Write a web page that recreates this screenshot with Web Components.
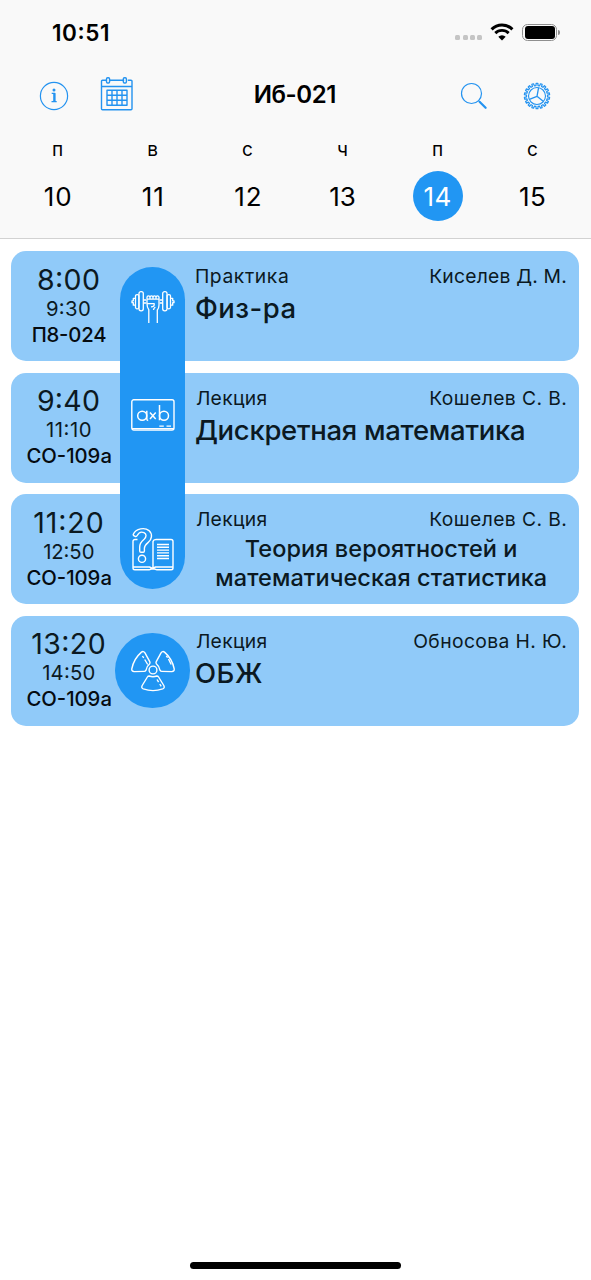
<!DOCTYPE html>
<html lang="ru">
<head>
<meta charset="utf-8">
<title>Иб-021</title>
<style>
html,body{margin:0;height:100%;background:#fff;overflow:hidden}
body{font-family:Inter,"Liberation Sans",sans-serif;color:#000}
</style>
</head>
<body>
<schedule-app></schedule-app>
<script>
const ctx = document.createElement('canvas').getContext('2d');
function define(name, html, after) {
  customElements.define(name, class extends HTMLElement {
    connectedCallback() {
      if (this.shadowRoot) return;
      const t = document.createElement('template');
      t.innerHTML = typeof html === 'function' ? html(this) : html;
      this.attachShadow({mode: 'open'}).append(t.content.cloneNode(true));
      if (after) after(this);
    }
  });
}

/* A single line of text tracked so that its ink is exactly [w] pixels wide. */
define('fit-text', '<style>:host{display:block;white-space:nowrap;width:max-content}span{display:block;font-feature-settings:"calt" 1}</style><span><slot></slot></span>', el => {
  const cs = getComputedStyle(el), s = el.textContent;
  ctx.font = `${cs.fontWeight} ${cs.fontSize} ${cs.fontFamily}`;
  const m = ctx.measureText(s);
  const left = -m.actualBoundingBoxLeft, right = m.actualBoundingBoxRight;
  const ls = (+el.getAttribute('w') - (right - left)) / (s.length - 1);
  const span = el.shadowRoot.querySelector('span');
  span.style.letterSpacing = ls + 'px';
  span.style.marginLeft = -left + 'px';
  span.style.marginRight = -(m.width - right + ls) + 'px';
});

const gear = () => {
  let d = '', n = 18;
  for (let i = 0; i < n; i++) {
    const p = (r, f) => { const a = (i + f) * 2 * Math.PI / n - Math.PI / 2; return (14 + r * Math.cos(a)).toFixed(2) + ' ' + (14 + r * Math.sin(a)).toFixed(2); };
    d += (i ? 'L' : 'M') + p(10.5, -.28) + 'L' + p(12.7, -.2) + 'L' + p(12.7, .2) + 'L' + p(10.5, .28);
  }
  return d + 'Z';
};
const blade = '<path d="M-3.800 6Q0 7.400 3.800 6Q5 6 5.600 7L10.800 15.500Q12 18 9.700 18.900Q0 22.300 -9.700 18.900Q-12 18 -10.800 15.500L-5.600 7Q-5 6 -3.800 6Z"/>';
const icons = {
  info: [30, 30, '<circle cx="15" cy="15" r="13.6" stroke-width="1.2"/><path d="M12.7 12.3h3.2v8.2M12.5 20.7h5.2" stroke-width="1.2"/><path d="M15.2 12.3v8.2" stroke-width="2"/><circle cx="15" cy="9.1" r="1.5" fill="currentColor" stroke="none"/>'],
  calendar: [34, 36, '<g stroke-width="1.4"><path d="M6.2 4.3H2.5a1 1 0 0 0-1 1V32.700a1 1 0 0 0 1 1H31a1 1 0 0 0 1-1V5.300a1 1 0 0 0-1-1h-3.200M9.700 4.300h14.500M1.500 10.500H32"/><rect x="6.500" y="1.700" width="3.100" height="5.300" rx="1.200"/><rect x="23.300" y="1.700" width="3.100" height="5.300" rx="1.200"/><path d="M7 14.300h20v15H7zM12 14.300v15M17 14.300v15M22 14.300v15M7 19.300h20M7 24.300h20"/></g>'],
  search: [28, 28, '<circle cx="12.500" cy="11.500" r="10" stroke-width="1.200"/><path d="M19.700 18.900l1.600 1.600" stroke-width="1.200"/><path d="M20.800 20l5.800 5.800" stroke-width="2.200" stroke-linecap="round"/>'],
  gear: [28, 28, `<path d="${gear()}" stroke-width="1.200"/><circle cx="14" cy="14" r="8.500" stroke-width="1.100"/><path d="M14 14.300L15.600 5.600M14 14.300L6.400 17.400M14 14.300l6.200 5" stroke-width="1.300"/>`],
  wifi: [24, 18, '<path d="M1.600 6.300A14.800 14.800 0 0 1 22.400 6.300" stroke-width="3.100"/><path d="M5.300 10.100A9.500 9.500 0 0 1 18.700 10.100" stroke-width="2.900"/><path d="M12 17.400L8.300 13.700A5.300 5.300 0 0 1 15.700 13.700Z" fill="currentColor" stroke="none"/>'],
  dumbbell: [44, 34, '<g stroke-width="1.300"><path d="M4.500 8.300H2.300v2.500H1v1.900h1.300v2.500h2.200M39.500 8.300h2.200v2.500H43v1.900h-1.300v2.500h-2.200"/><rect x="4.500" y="4.600" width="3.400" height="14.200" rx="1.500"/><rect x="8" y="1.600" width="4.300" height="19.200" rx="2"/><rect x="31.700" y="1.600" width="4.300" height="19.200" rx="2"/><rect x="36.100" y="4.600" width="3.400" height="14.200" rx="1.500"/><path d="M12.300 10h3M12.300 13h3M28.700 10h3M28.700 13h3"/><path d="M16 9V7.400a1.500 1.500 0 0 1 3 0V9m0-1.600a1.500 1.500 0 0 1 3 0V9m0-1.600a1.500 1.500 0 0 1 3 0V9m0-1.600a1.500 1.500 0 0 1 3 0V15q0 3-1.700 5V33M16 9.200h12M16 9.200v4.500h7.200q.6 3-3.200 3.100M16 13.700q0 4 1.800 6V33M22.500 20q0-1.600 1.800-3"/></g>'],
  board: [44, 32, '<rect x=".800" y=".800" width="42.200" height="30.200" rx="2" stroke-width="1.400"/><path d="M1 29.500H43M28.300 27.100h4.500M35.500 27.100h4.500" stroke-width="1.200"/><g stroke-width="1.500"><circle cx="11.200" cy="16.700" r="4.500"/><path d="M15.800 11.800V20q0 1.400 1.400 1.400M19 13.500l5.700 6.400M24.700 13.500L19 19.900M28.500 6V21.300"/><circle cx="33" cy="16.700" r="4.500"/></g>'],
  book: [42, 44, '<g stroke-width="1.400"><path d="M5.500 12.500H3a2 2 0 0 0-2 2V41q0 1.800 1.800 1.800H17l2.500-.8h3l2.500.8h14.200Q41 42.800 41 41V14.500a2 2 0 0 0-2-2H24q-2.500 0-3 2V41M1.500 40h16l3 1.500 3-1.500h17M25 17.500h12M25 20.300h12M25 23.100h12M25 25.900h12M25 28.700h12M25 31.500h12"/><path d="M1.200 7.500C4 1 13 .2 17 3.600 21 7.200 19.800 12.600 16 15.600c-2.800 2.300-3.600 3.300-3.600 5.600v2.800q0 1.300-1.300 1.300H9q-1.300 0-1.300-1.300V20c0-4 1.500-5.500 4.400-7.800C14.700 10 14.700 7 12 5.700 9 4.300 6.500 6 5.200 8.500q-.7 1.400-2.200.8-2-.6-1.800-1.800Z"/><circle cx="10" cy="31.800" r="3.600"/></g>'],
  radiation: [46, 44, `<g transform="translate(23 21)" stroke-width="1.400"><circle r="3.900"/>${[0, 120, 240].map(a => `<g transform="rotate(${a})">${blade}</g>`).join('')}<path d="M4 9.500l1.600 2.600M6.800 14l1.400 2.300M-10.500-14l1.200 2M-8.300-10.500l3 5M13.300-14.200l1.300 1.800M15.500-11l2.700 5.500"/></g>`]
};
define('line-icon', el => {
  const [w, h, body] = icons[el.getAttribute('name')];
  return `<style>:host{display:block;width:${w}px;height:${h}px;flex:none}svg{display:block}</style><svg width="${w}" height="${h}" viewBox="0 0 ${w} ${h}" fill="none" stroke="currentColor" stroke-linejoin="round">${body}</svg>`;
});

define('status-bar', `<style>
:host{display:flex;height:65px;box-sizing:border-box;padding:0 31px 0 53px;align-items:center;justify-content:space-between}
.time{font-size:22.500px;font-weight:600}
.right{display:flex;align-items:center}
.dots{display:flex;gap:2.200px;margin:9px 8px 0 0}.dots i{width:5px;height:5px;border-radius:1.500px;background:#c5c5c5}
.bat{box-sizing:border-box;width:35px;height:17.500px;border:1.300px solid #8f8f8f;border-radius:5.500px;padding:1.500px;margin-left:8px}.bat b{display:block;height:100%;border-radius:3px;background:#000}
.tip{width:2px;height:5.500px;border-radius:0 2px 2px 0;background:#8f8f8f;margin-left:1px}
line-icon{margin-top:-1px}
</style><fit-text class="time" w="55">10:51</fit-text><div class="right"><div class="dots"><i></i><i></i><i></i><i></i></div><line-icon name="wifi"></line-icon><div class="bat"><b></b></div><div class="tip"></div></div>`);

define('nav-bar', `<style>
:host{display:grid;grid-template-columns:1fr auto 1fr;height:60px;align-items:center;box-sizing:border-box;padding:0 40px 0 39px;color:#2493f0}
.l,.r{display:flex;align-items:center}.l{gap:31px}.r{justify-content:flex-end;gap:36px}
.t{color:#000;font-size:24px;font-weight:600;margin-top:-1px}
.l line-icon:first-child{margin-top:2px}.l line-icon:last-child{margin-top:-2px}
.r line-icon{margin-top:2px}
</style><div class="l"><line-icon name="info"></line-icon><line-icon name="calendar"></line-icon></div><fit-text class="t" w="80.500">Иб-021</fit-text><div class="r"><line-icon name="search"></line-icon><line-icon name="gear"></line-icon></div>`);

define('week-day', el => `<style>
:host{display:flex;flex-direction:column;align-items:center}
.d{font-size:19px;line-height:24px;height:24px;margin-top:13px}
.n{width:50px;height:50px;border-radius:50%;margin-top:9px;display:flex;align-items:center;justify-content:center;font-size:26px}
:host([active]) .n{background:#2196f3;color:#fff}
</style><div class="d">${el.getAttribute('day')}</div><div class="n"><fit-text w="${el.getAttribute('w')}">${el.getAttribute('date')}</fit-text></div>`);

define('lesson-card', el => {
  const a = n => el.getAttribute(n), [sw, ew, rw, kw, tw] = a('widths').split(' ');
  return `<style>
:host{display:grid;grid-template-columns:114px 1fr;height:110px;box-sizing:border-box;padding:13.500px 13px 0 0;border-radius:15px;background:#90caf9;color:#0b1922}
.time{display:flex;flex-direction:column;align-items:center;margin-top:-1px}
.s{font-size:28.500px;line-height:31px}.e{font-size:20.300px;line-height:27px}.room{font-size:20.300px;line-height:25px;font-weight:500;color:#050b10;margin-left:2px}
.info{margin:-.4px 0 0 70.500px}
.top{display:flex;justify-content:space-between;font-size:19.300px;line-height:24px}
.name{font-size:27.500px;font-weight:500;line-height:40px;display:flex;flex-direction:column}
:host([long]) .name{font-size:23.500px;line-height:28.500px;align-items:center;margin-top:3.700px}
</style><div class="time"><fit-text class="s" w="${sw}">${a('start')}</fit-text><fit-text class="e" w="${ew}">${a('end')}</fit-text><fit-text class="room" w="${rw}">${a('room')}</fit-text></div>
<div class="info"><div class="top"><fit-text w="${kw}">${a('kind')}</fit-text><fit-text w="${tw}">${a('teacher')}</fit-text></div><div class="name"><slot></slot></div></div>`;
});

define('lesson-track', `<style>
:host{position:absolute;left:108.500px;top:15.500px;width:65.500px;height:322px;border-radius:33px;background:#2196f3;color:#fff;display:flex;flex-direction:column;align-items:center}
</style><slot></slot>`);
define('lesson-badge', `<style>
:host{position:absolute;left:104px;top:382px;width:74.500px;height:74.500px;border-radius:50%;background:#2196f3;color:#fff;display:flex;align-items:center;justify-content:center}
</style><slot></slot>`);

define('schedule-app', `<style>
:host{display:flex;flex-direction:column;height:1280px;width:591px;background:#fff}
header{height:239px;box-sizing:border-box;background:#f9f9f9;border-bottom:1px solid #d2d2d2}
.week{display:grid;grid-template-columns:repeat(6,1fr);padding:0 11px 0 10px}
main{position:relative;display:flex;flex-direction:column;gap:11.500px;margin:12.300px 11.800px 0 11.400px}
footer{margin:auto auto 11.500px;width:211px;height:7px;border-radius:4px;background:#000}
.a{margin-top:23px}.b{margin-top:75px}.c{margin-top:96px}
</style>
<header><status-bar></status-bar><nav-bar></nav-bar>
<div class="week"><week-day day="п" date="10" w="25.500"></week-day><week-day day="в" date="11" w="19.500"></week-day><week-day day="с" date="12" w="24.500"></week-day><week-day day="ч" date="13" w="24.500"></week-day><week-day day="п" date="14" w="26" active></week-day><week-day day="с" date="15" w="25"></week-day></div></header>
<main>
<lesson-card start="8:00" end="9:30" room="П8-024" kind="Практика" teacher="Киселев Д. М." widths="61 43 73.500 92 136"><fit-text w="98.500">Физ-ра</fit-text></lesson-card>
<lesson-card start="9:40" end="11:10" room="СО-109а" kind="Лекция" teacher="Кошелев С. В." widths="61 45 84 70.500 136"><fit-text w="328">Дискретная математика</fit-text></lesson-card>
<lesson-card long start="11:20" end="12:50" room="СО-109а" kind="Лекция" teacher="Кошелев С. В." widths="68.500 50.500 84 70.500 136"><fit-text w="270.500">Теория вероятностей и</fit-text><fit-text w="329.500">математическая статистика</fit-text></lesson-card>
<lesson-card start="13:20" end="14:50" room="СО-109а" kind="Лекция" teacher="Обносова Н. Ю." widths="72.500 52.500 84 70.500 152"><fit-text w="66">ОБЖ</fit-text></lesson-card>
<lesson-track><line-icon class="a" name="dumbbell"></line-icon><line-icon class="b" name="board"></line-icon><line-icon class="c" name="book"></line-icon></lesson-track>
<lesson-badge><line-icon name="radiation"></line-icon></lesson-badge>
</main><footer></footer>`);
</script>
</body>
</html>
